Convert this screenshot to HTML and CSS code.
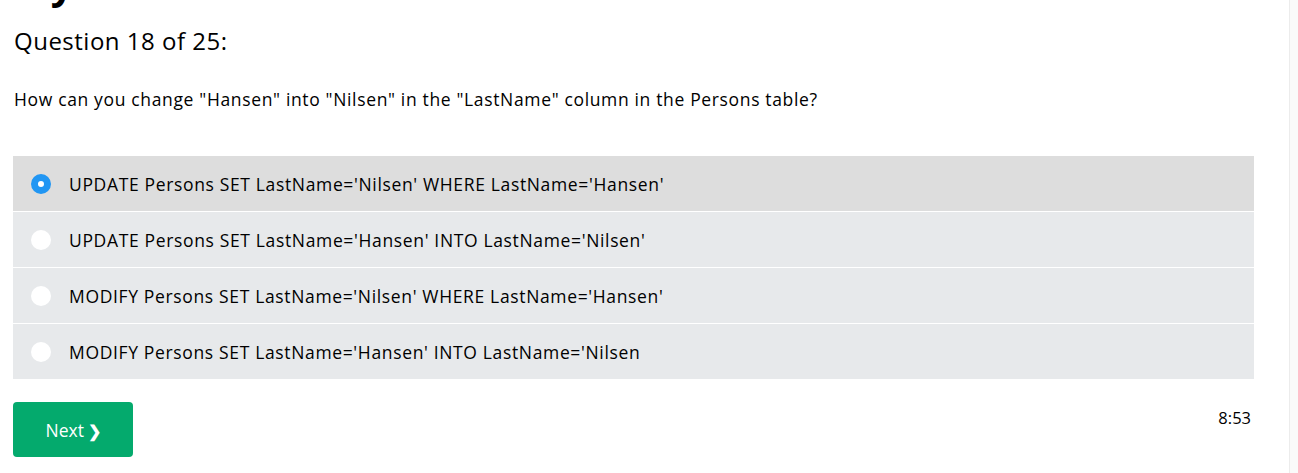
FILE: index.html
```html
<!DOCTYPE html>
<html>
<head>
<meta charset="utf-8">
<link rel="stylesheet" href="styles.css">
</head>
<body>
<div class="page">
  <div class="main">
    <h1 class="title">My</h1>
    <h2 class="qnum">Question 18 of 25:</h2>
    <p class="qtext">How can you change "Hansen" into "Nilsen" in the "LastName" column in the Persons table?</p>
    <div class="options">
      <label class="opt selected"><span class="radio on"></span><span>UPDATE Persons SET LastName='Nilsen' WHERE LastName='Hansen'</span></label>
      <label class="opt"><span class="radio"></span><span>UPDATE Persons SET LastName='Hansen' INTO LastName='Nilsen'</span></label>
      <label class="opt"><span class="radio"></span><span>MODIFY Persons SET LastName='Nilsen' WHERE LastName='Hansen'</span></label>
      <label class="opt"><span class="radio"></span><span>MODIFY Persons SET LastName='Hansen' INTO LastName='Nilsen</span></label>
    </div>
    <div class="footer">
      <button class="next">Next <span class="chev">&#10095;</span></button>
      <span class="timer">8:53</span>
    </div>
  </div>
</div>
</body>
</html>
```
FILE: styles.css
```css
html, body { margin: 0; padding: 0; }
body {
  background: #fafafa;
  font-family: "Open Sans", "Noto Sans", sans-serif;
  color: #000;
  height: 473px;
  overflow: hidden;
}
.page {
  display: flow-root;
  width: 1289px;
  height: 473px;
  background: #fff;
  border-right: 1px solid #ececec;
}
.main {
  padding: 0 35px 0 13px;
}
.title {
  margin: -40px 0 0 0;
  font-size: 40px;
  line-height: 48px;
  font-weight: bold;
}
.qnum {
  margin: 17px 0 0 1px;
  font-size: 24px;
  letter-spacing: 0.5px;
  font-weight: normal;
  line-height: 32px;
}
.qtext {
  margin: 30px 0 0 1px;
  font-size: 17.5px;
  letter-spacing: 0.65px;
  line-height: 24px;
}
.options {
  margin-top: 45px;
  display: flex;
  flex-direction: column;
  gap: 1px;
}
.opt {
  display: flex;
  align-items: center;
  height: 55px;
  background: #e7e9eb;
  padding-left: 18px;
  font-size: 17.5px;
  letter-spacing: 0.65px;
}
.opt.selected { background: #dddddd; }
.radio {
  width: 20px;
  height: 20px;
  border-radius: 50%;
  background: #fff;
  margin-right: 18px;
  box-sizing: border-box;
  flex: none;
}
.radio.on {
  background: #fff;
  border: 7px solid #2196f3;
}
.footer {
  display: flex;
  justify-content: space-between;
  align-items: flex-start;
  margin-top: 23px;
}
.next {
  width: 120px;
  height: 55px;
  background: #04aa6d;
  color: #fff;
  border: none;
  border-radius: 4px;
  font-family: inherit;
  font-size: 17.5px;
  padding: 0 0 0 1px;
}
.chev { font-size: 16px; font-weight: bold; }
.timer {
  font-size: 16.5px;
  margin-top: 4px;
  margin-right: 3px;
}
```
